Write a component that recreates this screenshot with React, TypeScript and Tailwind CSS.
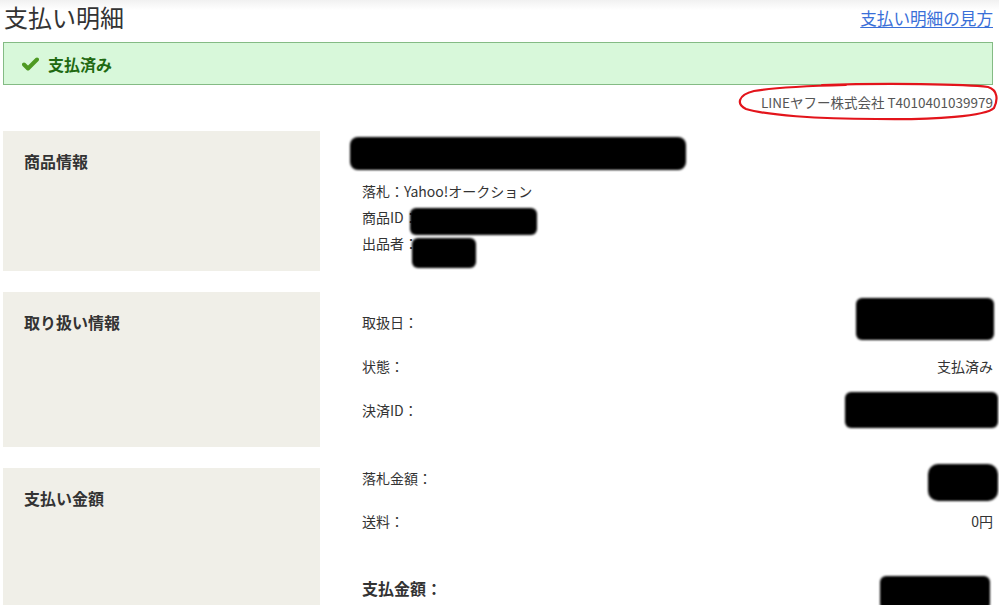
import React from 'react';

const font = { fontFamily: '"Noto Sans CJK JP", "Noto Sans", "Liberation Sans", sans-serif' };

// 黒塗り部分
const Blot = ({ className }: { className: string }) => (
  <div className={`shrink-0 bg-black rounded-[6px] blur-[1.2px] ${className}`} />
);

const Check = () => (
  <svg width="17" height="14" viewBox="0 0 17 14" className="shrink-0">
    <path d="M2 7.5 L6 11.5 L15 2.5" fill="none" stroke="#4e9a22" strokeWidth="4" strokeLinecap="round" strokeLinejoin="round" />
  </svg>
);

const SideLabel = ({ children }: { children: React.ReactNode }) => (
  <div className="w-[317px] shrink-0 bg-[#f0efe8] pl-[21px] pt-[20px] text-[16px] leading-[20px] font-bold text-[#333]">
    {children}
  </div>
);

function App() {
  return (
    <div style={font} className="relative w-[999px] h-[605px] overflow-hidden bg-white text-[#333]">
      {/* ヘッダー */}
      <div className="flex items-end justify-between h-[32px] pl-[4px] pr-[6px] bg-gradient-to-b from-[#f1f1f1] to-white to-[10px]">
        <h1 className="text-[24px] leading-[30px] font-normal text-[#333]">支払い明細</h1>
        <a href="#" className="text-[16.6px] leading-[22px] mb-[3px] text-[#3a6fd8] underline underline-offset-2">支払い明細の見方</a>
      </div>

      {/* ステータス */}
      <div className="mx-[3px] mt-[10px] w-[990px] h-[43px] flex items-center gap-[9px] pl-[18px] bg-[#d8f8da] border border-[#84bb84]">
        <Check />
        <span className="text-[16px] font-bold text-[#1f6a12]">支払済み</span>
      </div>

      <div className="flex justify-end pr-[6px] pt-[8px] h-[46px] text-[13.5px] leading-[18px] text-[#555]">
        LINEヤフー株式会社 T4010401039979
      </div>

      {/* 商品情報 */}
      <div className="flex ml-[3px] h-[140px]">
        <SideLabel>商品情報</SideLabel>
        <div className="flex-1 pl-[42px] pr-[6px] text-[14px]">
          <Blot className="ml-[-12px] mt-[6px] w-[336px] h-[33px] rounded-[8px]" />
          <div className="mt-[8px] h-[26px] flex items-center">落札：Yahoo!オークション</div>
          <div className="h-[26px] flex items-center">
            商品ID：
            <Blot className="ml-[-8px] mt-[8px] w-[127px] h-[27px]" />
          </div>
          <div className="h-[26px] flex items-center">
            出品者：
            <Blot className="ml-[-6px] mt-[20px] w-[64px] h-[30px]" />
          </div>
        </div>
      </div>

      {/* 取り扱い情報 */}
      <div className="flex ml-[3px] mt-[21px] h-[155px]">
        <SideLabel>取り扱い情報</SideLabel>
        <div className="flex-1 pl-[42px] pr-[6px] pt-[8px] text-[14px]">
          <div className="h-[44px] flex items-center justify-between">
            <span>取扱日：</span>
            <Blot className="mr-[-1px] mt-[-6px] w-[138px] h-[42px]" />
          </div>
          <div className="h-[44px] flex items-center justify-between">
            <span>状態：</span>
            <span>支払済み</span>
          </div>
          <div className="h-[44px] flex items-center justify-between">
            <span>決済ID：</span>
            <Blot className="mr-[-5px] w-[153px] h-[36px]" />
          </div>
        </div>
      </div>

      {/* 支払い金額 */}
      <div className="flex ml-[3px] mt-[21px] h-[160px]">
        <SideLabel>支払い金額</SideLabel>
        <div className="flex-1 pl-[42px] pr-[6px] text-[14px]">
          <div className="h-[20px] flex items-center justify-between">
            <span>落札金額：</span>
            <Blot className="mr-[-5px] mt-[8px] w-[70px] h-[37px] rounded-[10px]" />
          </div>
          <div className="mt-[23px] h-[20px] flex items-center justify-between">
            <span>送料：</span>
            <span>0円</span>
          </div>
          <div className="mt-[47px] h-[20px] flex items-center justify-between">
            <span className="text-[16px] font-bold">支払金額：</span>
            <Blot className="mr-[3px] mt-[10px] w-[110px] h-[34px]" />
          </div>
        </div>
      </div>

      {/* 赤丸の書き込み */}
      <svg className="absolute left-[736px] top-[80px] pointer-events-none" width="263" height="42" viewBox="0 0 263 42">
        <path
          d="M 86 5 C 150 3, 230 4, 252 7 C 262 10, 262 20, 258 28 C 250 36, 200 40, 140 39 C 80 39, 30 35, 10 29 C 0 24, 2 15, 18 11 C 40 7, 70 6, 110 5"
          fill="none"
          stroke="#e3141b"
          strokeWidth="2.2"
          strokeLinecap="round"
        />
      </svg>
    </div>
  );
}

export default App;
